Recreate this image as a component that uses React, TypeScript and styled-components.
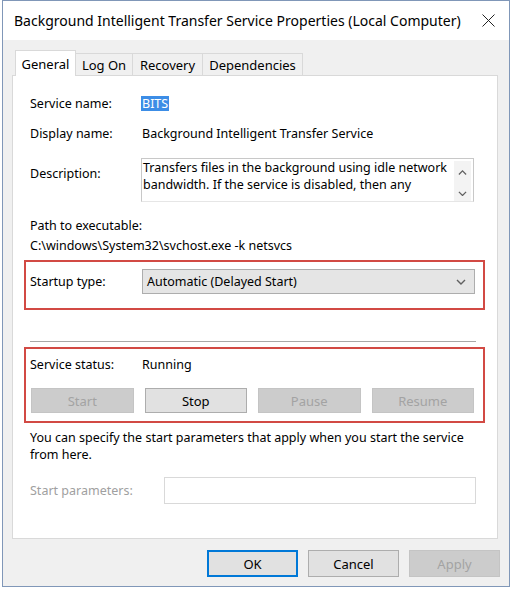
import React from "react";
import styled, { createGlobalStyle } from "styled-components";

const Global = createGlobalStyle`
  html, body { margin: 0; padding: 0; background: #fff; }
  body {
    font-family: "Noto Sans", "Segoe UI", sans-serif;
    font-size: 12.5px;
    color: #000;
  }
  * { box-sizing: border-box; }
`;

const Window = styled.div`
  margin-left: 2px;
  width: 508px;
  height: 587px;
  border: 1px solid #8097b8;
  background: #f0f0f0;
  display: flex;
  flex-direction: column;
`;

const TitleBar = styled.div`
  height: 39px;
  background: #fff;
  display: flex;
  align-items: center;
  padding-left: 11px;
  font-size: 14px;
  flex-shrink: 0;
`;

const Title = styled.div`
  flex: 1;
  white-space: nowrap;
`;

const CloseBtn = styled.div`
  width: 42px;
  height: 100%;
  display: flex;
  align-items: center;
  justify-content: center;
`;

const Body = styled.div`
  flex: 1;
  padding: 10px 11px 0 9px;
  display: flex;
  flex-direction: column;
`;

const TabStrip = styled.div`
  display: flex;
  align-items: flex-end;
  height: 26px;
  padding-left: 4px;
  margin-bottom: -1px;
  position: relative;
  z-index: 1;
`;

const Tab = styled.div<{ $active?: boolean; $w: number }>`
  width: ${(p) => p.$w}px;
  height: ${(p) => (p.$active ? 26 : 23)}px;
  margin-left: -1px;
  border: 1px solid #d9d9d9;
  border-bottom: ${(p) => (p.$active ? "none" : "1px solid #d9d9d9")};
  background: ${(p) => (p.$active ? "#fff" : "#f0f0f0")};
  display: flex;
  align-items: center;
  justify-content: center;
  padding-top: ${(p) => (p.$active ? 0 : 1)}px;
  font-size: 13px;
`;

const Panel = styled.div`
  height: 464px;
  background: #fff;
  border: 1px solid #d9d9d9;
  padding: 19px 21px 0 17px;
  display: flex;
  flex-direction: column;
`;

const FieldRow = styled.div<{ $mt?: number; $cols?: number }>`
  display: grid;
  grid-template-columns: ${(p) => p.$cols ?? 112}px 1fr;
  align-items: center;
  margin-top: ${(p) => p.$mt ?? 0}px;
  min-height: 18px;
  line-height: 18px;
`;

const TopRow = styled(FieldRow)`
  align-items: start;
`;

const Label = styled.div<{ $disabled?: boolean; $pt?: number }>`
  color: ${(p) => (p.$disabled ? "#a0a0a0" : "#000")};
  padding-top: ${(p) => p.$pt ?? 0}px;
  white-space: nowrap;
`;

const Value = styled.div`
  white-space: nowrap;
`;

const Selected = styled.span`
  display: inline-block;
  background: #3c8de6;
  color: #fff;
  line-height: 15px;
  padding: 0 1px;
  margin-left: -1px;
`;

const DescBox = styled.div`
  height: 44px;
  margin-left: -1px;
  width: 333px;
  border: 1px solid #c8c8c8;
  border-bottom-color: #e6e6e6;
  display: flex;
`;

const DescText = styled.div`
  flex: 1;
  padding: 0 0 0 1px;
  line-height: 17px;
  white-space: nowrap;
  overflow: hidden;
`;

const ScrollBar = styled.div`
  width: 17px;
  margin: 2px 2px 0 0;
  background: #f3f3f3;
  display: flex;
  flex-direction: column;
  align-items: center;
  justify-content: space-between;
  padding: 9px 0 5px;
`;

const Plain = styled.div<{ $mt?: number }>`
  margin-top: ${(p) => p.$mt ?? 0}px;
  line-height: 18px;
  white-space: nowrap;
`;

const Callout = styled.div<{ $mt: number; $pad: string }>`
  margin: ${(p) => p.$mt}px -9px 0 -6px;
  border: 2px solid #d24a44;
  padding: ${(p) => p.$pad};
`;

const Select = styled.div`
  height: 25px;
  border: 1px solid #adadad;
  background: #e5e5e5;
  display: flex;
  align-items: center;
  justify-content: space-between;
  padding: 0 8px 0 4px;
`;

const Separator = styled.div`
  margin-top: 31px;
  height: 2px;
  border-top: 1px solid #a8a8a8;
  border-bottom: 1px solid #fff;
`;

const ButtonRow = styled.div`
  display: grid;
  grid-template-columns: repeat(4, 1fr);
  column-gap: 11px;
  margin-top: 14px;
  padding-left: 1px;
`;

const Btn = styled.div<{ $disabled?: boolean; $focused?: boolean; $w?: number }>`
  height: ${(p) => (p.$w ? 27 : 25)}px;
  width: ${(p) => (p.$w ? `${p.$w}px` : "auto")};
  display: flex;
  align-items: center;
  justify-content: center;
  background: ${(p) => (p.$disabled ? "#cccccc" : "#e1e1e1")};
  color: ${(p) => (p.$disabled ? "#a3a3a3" : "#000")};
  border: 1px solid
    ${(p) => (p.$focused ? "#0078d7" : p.$disabled ? "#c4c4c4" : "#adadad")};
  box-shadow: ${(p) => (p.$focused ? "inset 0 0 0 1px #0078d7" : "none")};
  font-size: 13px;
`;

const Para = styled.div`
  margin-top: 6px;
  line-height: 17px;
`;

const TextInput = styled.div`
  height: 27px;
  border: 1px solid #d9d9d9;
  background: #fff;
`;

const Footer = styled.div`
  display: flex;
  justify-content: flex-end;
  gap: 10px;
  margin: 11px -2px 0 0;
`;

const Chevron = ({ dir, size = 10 }: { dir: "up" | "down"; size?: number }) => (
  <svg width={size} height={size * 0.6} viewBox="0 0 10 6" fill="none">
    <path
      d={dir === "down" ? "M1 1 L5 5 L9 1" : "M1 5 L5 1 L9 5"}
      stroke="#606060"
      strokeWidth="1.4"
    />
  </svg>
);

const CloseIcon = () => (
  <svg width="13" height="13" viewBox="0 0 13 13">
    <path d="M0.5 0.5 L12.5 12.5 M12.5 0.5 L0.5 12.5" stroke="#222" strokeWidth="1" />
  </svg>
);

export default function App() {
  return (
    <>
      <Global />
      <Window>
        <TitleBar>
          <Title>Background Intelligent Transfer Service Properties (Local Computer)</Title>
          <CloseBtn>
            <CloseIcon />
          </CloseBtn>
        </TitleBar>
        <Body>
          <TabStrip>
            <Tab $active $w={61}>General</Tab>
            <Tab $w={58}>Log On</Tab>
            <Tab $w={71}>Recovery</Tab>
            <Tab $w={101}>Dependencies</Tab>
          </TabStrip>
          <Panel>
            <FieldRow>
              <Label>Service name:</Label>
              <Value>
                <Selected>BITS</Selected>
              </Value>
            </FieldRow>
            <FieldRow $mt={12}>
              <Label>Display name:</Label>
              <Value>Background Intelligent Transfer Service</Value>
            </FieldRow>
            <TopRow $mt={15}>
              <Label $pt={7}>Description:</Label>
              <DescBox>
                <DescText>
                  Transfers files in the background using idle network
                  <br />
                  bandwidth. If the service is disabled, then any
                </DescText>
                <ScrollBar>
                  <Chevron dir="up" size={9} />
                  <Chevron dir="down" size={9} />
                </ScrollBar>
              </DescBox>
            </TopRow>
            <Plain $mt={15}>Path to executable:</Plain>
            <Plain $mt={2}>{"C:\\windows\\System32\\svchost.exe -k netsvcs"}</Plain>
            <Callout $mt={5} $pad="7px 8px 14px 4px">
              <FieldRow>
                <Label>Startup type:</Label>
                <Select>
                  <span>Automatic (Delayed Start)</span>
                  <Chevron dir="down" size={10} />
                </Select>
              </FieldRow>
            </Callout>
            <Separator />
            <Callout $mt={4} $pad="7px 9px 8px 4px">
              <FieldRow>
                <Label>Service status:</Label>
                <Value>Running</Value>
              </FieldRow>
              <ButtonRow>
                <Btn $disabled>Start</Btn>
                <Btn>Stop</Btn>
                <Btn $disabled>Pause</Btn>
                <Btn $disabled>Resume</Btn>
              </ButtonRow>
            </Callout>
            <Para>
              You can specify the start parameters that apply when you start the service
              <br />
              from here.
            </Para>
            <FieldRow $mt={14} $cols={134}>
              <Label $disabled>Start parameters:</Label>
              <TextInput />
            </FieldRow>
          </Panel>
          <Footer>
            <Btn $focused $w={91}>OK</Btn>
            <Btn $w={91}>Cancel</Btn>
            <Btn $disabled $w={91}>Apply</Btn>
          </Footer>
        </Body>
      </Window>
    </>
  );
}
